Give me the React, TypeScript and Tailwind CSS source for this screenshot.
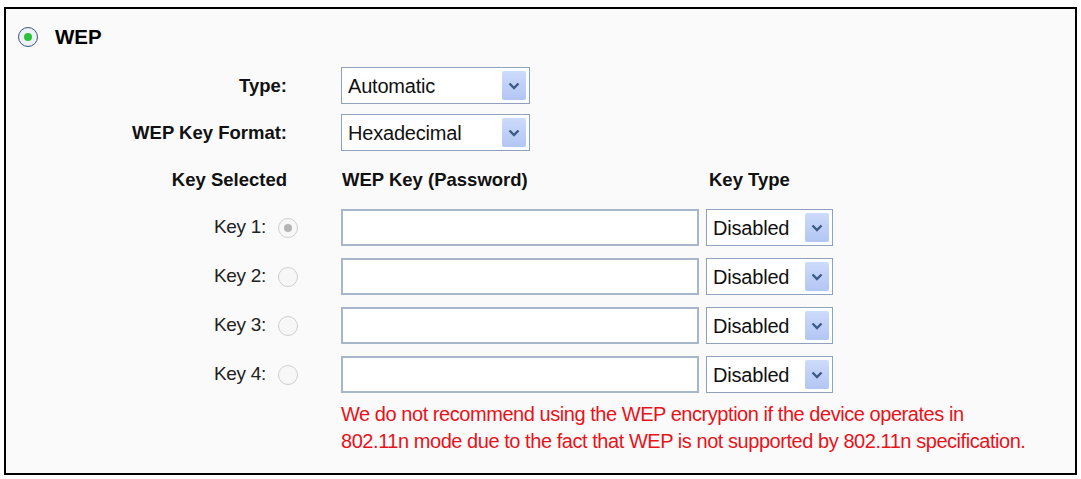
import React from 'react'

const font = "font-['Liberation_Sans',Arial,sans-serif]"
const boldLabel = 'text-[18.5px] font-bold text-[#111]'

const Chevron = () => (
  <span className="flex h-full w-[24px] items-center justify-center rounded-[2px] bg-gradient-to-b from-[#cddbfb] to-[#b2c6f3]">
    <svg width="12" height="8" viewBox="0 0 12 8">
      <path d="M1.5 1.5 L6 6 L10.5 1.5" fill="none" stroke="#3f5a86" strokeWidth="2.4" />
    </svg>
  </span>
)

const Select = ({value, width}: {value: string; width: string}) => (
  <div className={`flex h-[37px] ${width} items-stretch border border-[#8ea2bd] bg-white py-[3px] pr-[3px]`}>
    <span className="flex flex-1 items-center pl-[6px] text-[20px] tracking-[-0.2px] text-[#111]">{value}</span>
    <Chevron />
  </div>
)

const Radio = ({checked, disabled}: {checked?: boolean; disabled?: boolean}) => {
  if (disabled) {
    return (
      <span className="flex h-[20px] w-[20px] items-center justify-center rounded-full border border-[#cfcfcf] bg-[#f7f7f7]">
        {checked && <span className="h-[8px] w-[8px] rounded-full bg-[#b4b4b4]" />}
      </span>
    )
  }
  return (
    <span className="flex h-[20px] w-[20px] items-center justify-center rounded-full border-[1.5px] border-[#3a5578] bg-[#eef2f7]">
      {checked && <span className="h-[8px] w-[8px] rounded-full bg-[#2fbf3a]" />}
    </span>
  )
}

const keys = [1, 2, 3, 4]

export default function App() {
  return (
    <div className={`h-[479px] w-[1081px] bg-white pl-[4px] pt-[7px] ${font}`}>
      <div className="h-[468px] w-[1073px] border-2 border-black bg-[#fafafa]">
        <div className="flex h-[24px] items-center gap-[17px] pl-[12px] mt-[16px]">
          <Radio checked />
          <span className="text-[20.5px] font-bold text-black">WEP</span>
        </div>

        <div className="mt-[13px] grid grid-cols-[281px_54px_365px_130px] grid-rows-[47px_47px_47px_49px_49px_49px_49px] items-center">
          <span className={`text-right ${boldLabel}`}>Type:</span>
          <span />
          <div className="col-span-2">
            <Select value="Automatic" width="w-[189px]" />
          </div>

          <span className={`text-right ${boldLabel}`}>WEP Key Format:</span>
          <span />
          <div className="col-span-2">
            <Select value="Hexadecimal" width="w-[189px]" />
          </div>

          <span className={`text-right ${boldLabel}`}>Key Selected</span>
          <span />
          <span className={`pl-[1px] ${boldLabel}`}>WEP Key (Password)</span>
          <span className={`pl-[3px] ${boldLabel}`}>Key Type</span>

          {keys.map(k => (
            <React.Fragment key={k}>
              <div className="col-span-2 flex items-center justify-end gap-[12px] pr-[43px]">
                <span className="text-[19px] tracking-[-0.3px] text-[#222]">Key {k}:</span>
                <Radio disabled checked={k === 1} />
              </div>
              <div className="pr-[7px]">
                <div className="h-[37px] w-full border-2 border-[#a7b6ca] bg-white" />
              </div>
              <Select value="Disabled" width="w-[127px]" />
            </React.Fragment>
          ))}
        </div>

        <p className="ml-[335px] mt-[2px] text-[20px] leading-[27px] tracking-[-0.45px] text-[#e8121b]">
          We do not recommend using the WEP encryption if the device operates in
          <br />
          802.11n mode due to the fact that WEP is not supported by 802.11n specification.
        </p>
      </div>
    </div>
  )
}
